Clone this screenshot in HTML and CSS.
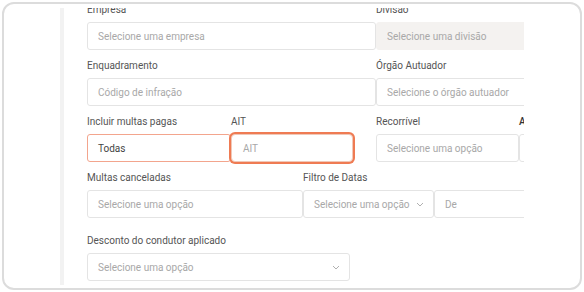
FILE: index.html
```html
<!DOCTYPE html>
<html>
<head>
<meta charset="utf-8">
<title>Filtros de multas</title>
<link rel="stylesheet" href="styles.css">
</head>
<body>
<div class="frame">
  <div class="rail"></div>
  <div class="panel">
    <div class="form">

      <div class="row">
        <div class="field w-empresa">
          <label>Empresa</label>
          <div class="box">Selecione uma empresa</div>
        </div>
        <div class="field w-side">
          <label>Divisão</label>
          <div class="box disabled">Selecione uma divisão</div>
        </div>
      </div>

      <div class="row">
        <div class="field w-empresa">
          <label>Enquadramento</label>
          <div class="box">Código de infração</div>
        </div>
        <div class="field w-side">
          <label>Órgão Autuador</label>
          <div class="box">Selecione o órgão autuador</div>
        </div>
      </div>

      <div class="row">
        <div class="field w-todas">
          <label>Incluir multas pagas</label>
          <div class="box error value">Todas</div>
        </div>
        <div class="field w-ait">
          <label>AIT</label>
          <div class="box focus">AIT</div>
        </div>
        <div class="field w-recorrivel">
          <label>Recorrível</label>
          <div class="box">Selecione uma opção</div>
        </div>
        <div class="field w-side">
          <label class="strong">Ano</label>
          <div class="box"></div>
        </div>
      </div>

      <div class="row">
        <div class="field w-canceladas">
          <label>Multas canceladas</label>
          <div class="box">Selecione uma opção</div>
        </div>
        <div class="field group">
          <label>Filtro de Datas</label>
          <div class="joined">
            <div class="box select w-filtro">Selecione uma opção
              <svg class="chev" width="8" height="5" viewBox="0 0 8 5"><path d="M1 1l3 3 3-3" fill="none" stroke="#b0b0b0" stroke-width="1"/></svg>
            </div>
            <div class="box w-de">De</div>
          </div>
        </div>
      </div>

      <div class="row last">
        <div class="field w-desconto">
          <label>Desconto do condutor aplicado</label>
          <div class="box select">Selecione uma opção
            <svg class="chev" width="8" height="5" viewBox="0 0 8 5"><path d="M1 1l3 3 3-3" fill="none" stroke="#b0b0b0" stroke-width="1"/></svg>
          </div>
        </div>
      </div>

    </div>
  </div>
</div>
</body>
</html>
```

FILE: styles.css
```css
body { margin: 0; background: #fff; font-family: Roboto, "Liberation Sans", sans-serif; color: #555; }

.frame {
  box-sizing: border-box;
  margin: 2px 0 0 2px;
  width: 580px;
  height: 288px;
  border: 2px solid #dcdcdc;
  border-radius: 12px;
  padding: 4px 0 3px 56px;
  display: flex;
  overflow: hidden;
}

.rail { width: 4px; background: #f2f2f2; flex-shrink: 0; }

.panel { width: 460px; flex-shrink: 0; overflow: hidden; }

.form { margin-top: -4px; padding-left: 23px; }

.row { display: flex; margin-bottom: 10px; }
.row:nth-child(4) { margin-bottom: 17px; }

.field { display: flex; flex-direction: column; flex-shrink: 0; }

label { font-size: 10px; line-height: 12px; height: 12px; margin-bottom: 6px; color: #555; white-space: nowrap; }
label.strong { color: #333; font-weight: 500; }

.box {
  box-sizing: border-box;
  height: 28px;
  border: 1px solid #e4e4e4;
  border-radius: 3px;
  padding: 0 10px;
  display: flex;
  align-items: center;
  font-size: 10px;
  color: #a8a8a8;
  white-space: nowrap;
  overflow: hidden;
  background: #fff;
}

.box.disabled { background: #f4f2f0; border-color: #f4f2f0; }
.box.error { border-color: #f3a58d; }
.box.value { color: #444; }
.box.focus { border-color: #f0c8b8; box-shadow: 0 0 0 2px #ef7b53; border-radius: 4px; padding-left: 11px; }

.box.select { justify-content: space-between; padding-right: 9px; }
.chev { flex-shrink: 0; }

.joined { display: flex; }

.w-empresa { width: 289px; }
.w-side { width: 160px; }
.w-todas { width: 144px; }
.w-ait { width: 122px; margin-right: 23px; }
.w-recorrivel { width: 143px; }
.w-canceladas { width: 216px; }
.w-filtro { width: 131px; flex-shrink: 0; }
.w-de { width: 120px; flex-shrink: 0; }
.w-desconto { width: 263px; }
```
